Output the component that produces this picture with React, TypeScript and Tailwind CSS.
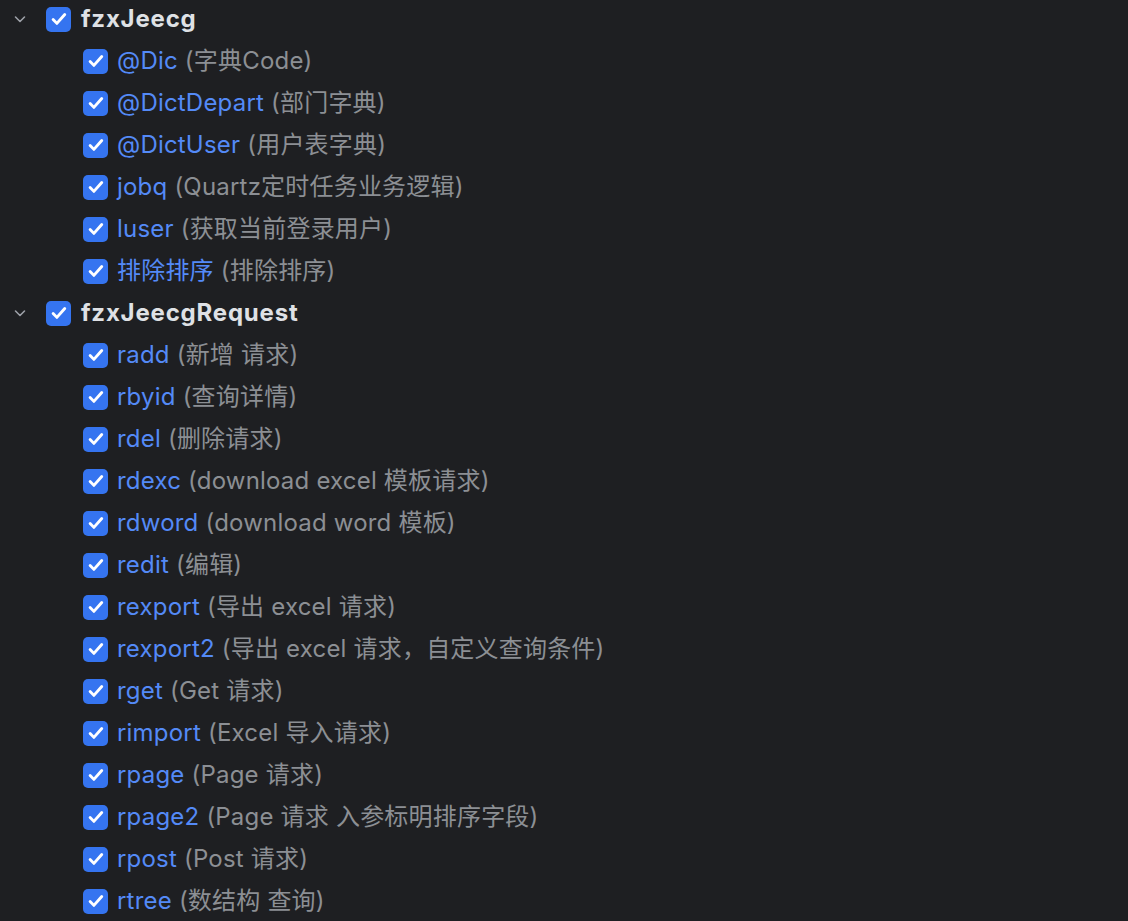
import React from "react";

type Item = { name: string; desc: string };

const groups: { title: string; items: Item[] }[] = [
  {
    title: "fzxJeecg",
    items: [
      { name: "@Dic", desc: "(字典Code)" },
      { name: "@DictDepart", desc: "(部门字典)" },
      { name: "@DictUser", desc: "(用户表字典)" },
      { name: "jobq", desc: "(Quartz定时任务业务逻辑)" },
      { name: "luser", desc: "(获取当前登录用户)" },
      { name: "排除排序", desc: "(排除排序)" },
    ],
  },
  {
    title: "fzxJeecgRequest",
    items: [
      { name: "radd", desc: "(新增 请求)" },
      { name: "rbyid", desc: "(查询详情)" },
      { name: "rdel", desc: "(删除请求)" },
      { name: "rdexc", desc: "(download excel 模板请求)" },
      { name: "rdword", desc: "(download word 模板)" },
      { name: "redit", desc: "(编辑)" },
      { name: "rexport", desc: "(导出 excel 请求)" },
      { name: "rexport2", desc: "(导出 excel 请求，自定义查询条件)" },
      { name: "rget", desc: "(Get 请求)" },
      { name: "rimport", desc: "(Excel 导入请求)" },
      { name: "rpage", desc: "(Page 请求)" },
      { name: "rpage2", desc: "(Page 请求 入参标明排序字段)" },
      { name: "rpost", desc: "(Post 请求)" },
      { name: "rtree", desc: "(数结构 查询)" },
    ],
  },
];

const Check = () => (
  <span className="flex h-[25px] w-[25px] shrink-0 items-center justify-center rounded-[5px] bg-[#3574f0]">
    <svg width="20" height="20" viewBox="0 0 16 16" fill="none">
      <path d="M3.3 8.4l3 3.1L12.6 4.4" stroke="#ffffff" strokeWidth="2.3" strokeLinecap="round" strokeLinejoin="round" />
    </svg>
  </span>
);

const Chevron = () => (
  <svg width="16" height="16" viewBox="0 0 16 16" fill="none">
    <path d="M3.5 6l4.5 4.5L12.5 6" stroke="#9da0a8" strokeWidth="1.6" strokeLinecap="round" strokeLinejoin="round" />
  </svg>
);

export default function App() {
  return (
    <div
      className="min-h-[921px] w-full overflow-hidden bg-[#1e1f22] text-[24px]"
      style={{ fontFamily: 'Inter, "Noto Sans CJK SC", sans-serif' }}
    >
      <div className="-mt-[2px]">
        {groups.map((g) => (
          <div key={g.title}>
            <div className="flex h-[42px] items-center">
              <span className="ml-[12px] flex w-[16px] justify-center">
                <Chevron />
              </span>
              <span className="ml-[18px]">
                <Check />
              </span>
              <span className="ml-[10px] font-bold tracking-[0.8px] text-[#dfe1e5]">{g.title}</span>
            </div>
            {g.items.map((it) => (
              <div key={it.name} className="flex h-[42px] items-center pl-[83px] tracking-[0.2px]">
                <Check />
                <span className="ml-[9px] text-[#548af7]">{it.name}</span>
                <span className="ml-[7px] text-[#8c8f94]">{it.desc}</span>
              </div>
            ))}
          </div>
        ))}
      </div>
    </div>
  );
}
